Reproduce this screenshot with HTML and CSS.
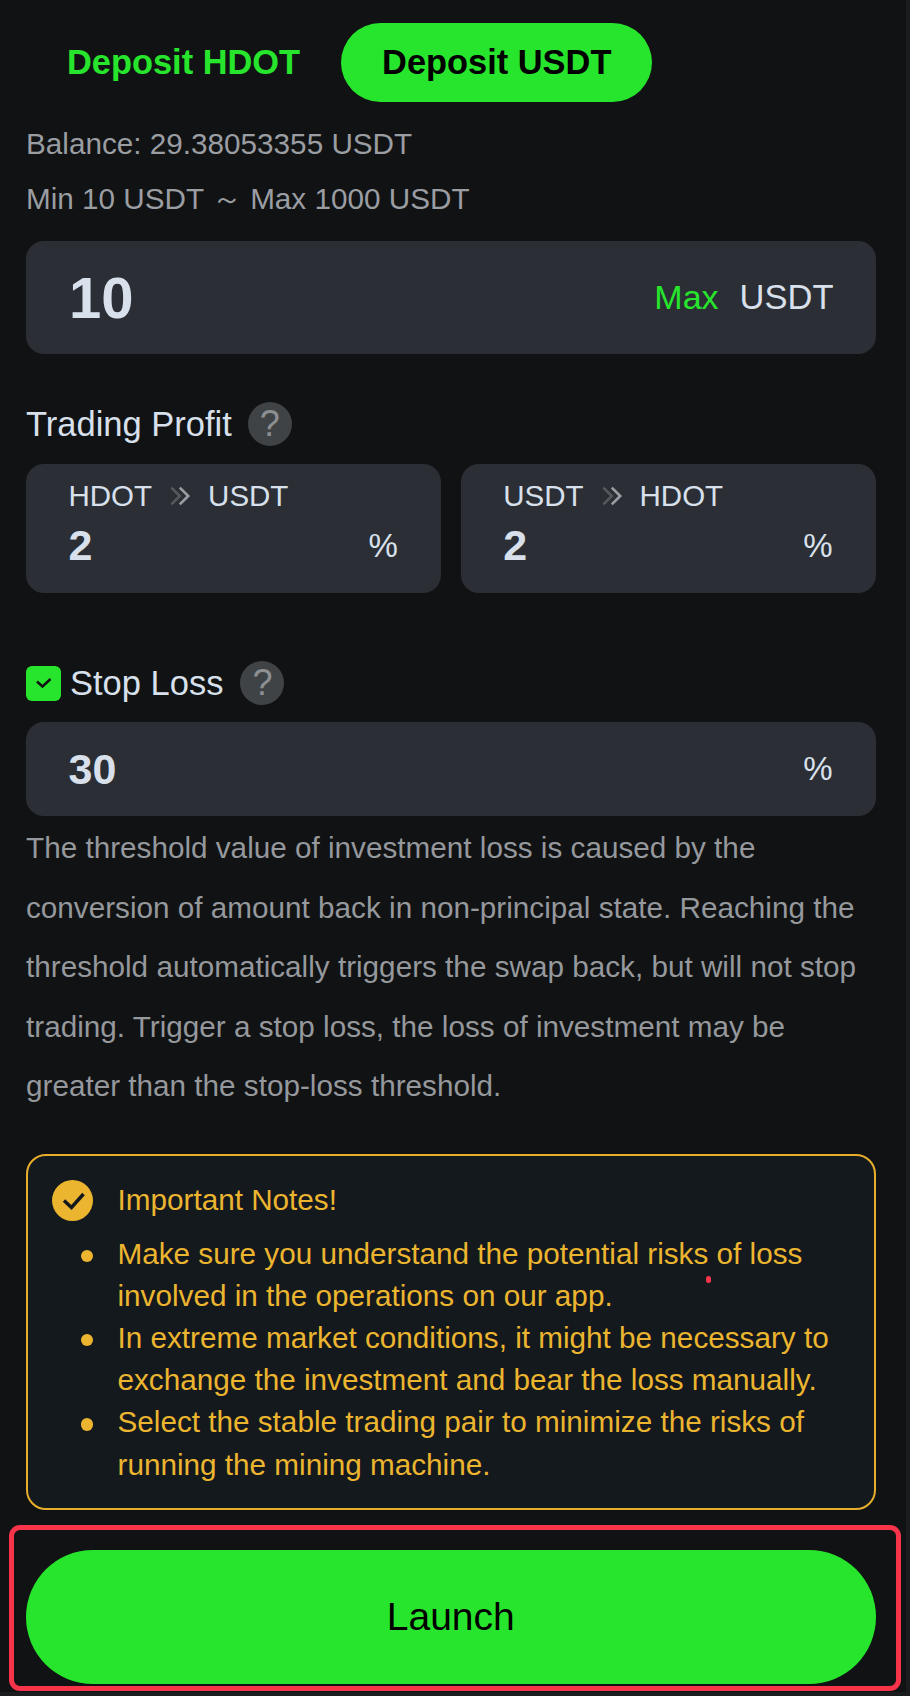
FILE: index.html
```html
<!DOCTYPE html>
<html lang="en">
<head>
  <meta charset="UTF-8">
  <title>Launch</title>
  <link rel="stylesheet" href="styles.css">
</head>
<body>
  <div class="tabs">
    <div class="tab">Deposit HDOT</div>
    <div class="tab active">Deposit USDT</div>
  </div>
  <div class="info">Balance: 29.38053355 USDT</div>
  <div class="info">Min 10 USDT ～ Max 1000 USDT</div>

  <div class="amount">
    <span class="amount-value">10</span>
    <span class="max">Max</span>
    <span class="unit">USDT</span>
  </div>

  <div class="label-row profit-label">
    <span>Trading Profit</span>
    <span class="help">?</span>
  </div>
  <div class="pairs">
    <div class="pair">
      <div class="pair-name">
        <span>HDOT</span>
        <svg class="arrows" viewBox="0 0 20 20"><path d="M2 3l7 7-7 7" stroke="#55585c"/><path d="M9 3l7 7-7 7" stroke="#9a9ea4"/></svg>
        <span>USDT</span>
      </div>
      <div class="pair-value"><b>2</b><span>%</span></div>
    </div>
    <div class="pair">
      <div class="pair-name">
        <span>USDT</span>
        <svg class="arrows" viewBox="0 0 20 20"><path d="M2 3l7 7-7 7" stroke="#55585c"/><path d="M9 3l7 7-7 7" stroke="#9a9ea4"/></svg>
        <span>HDOT</span>
      </div>
      <div class="pair-value"><b>2</b><span>%</span></div>
    </div>
  </div>

  <div class="label-row stop-label">
    <span class="check"><svg viewBox="0 0 35 35"><path d="M11 15.5l5.5 5 8-7.5"/></svg></span>
    <span>Stop Loss</span>
    <span class="help">?</span>
  </div>
  <div class="stop-input"><b>30</b><span>%</span></div>
  <p class="desc">The threshold value of investment loss is caused by the conversion of amount back in non-principal state. Reaching the threshold automatically triggers the swap back, but will not stop trading. Trigger a stop loss, the loss of investment may be greater than the stop-loss threshold.</p>

  <div class="notes">
    <div class="notes-title">
      <svg class="notes-icon" viewBox="0 0 41 41"><circle cx="20.5" cy="20.5" r="20.5" fill="#ecb52f"/><path d="M12 20.5l7.5 7L31.5 14" fill="none" stroke="#14191d" stroke-width="3.5"/></svg>
      <span>Important Notes!</span>
    </div>
    <ul>
      <li>Make sure you understand the potential risks of loss involved in the operations on our app.</li>
      <li>In extreme market conditions, it might be necessary to exchange the investment and bear the loss manually.</li>
      <li>Select the stable trading pair to minimize the risks of running the mining machine.</li>
    </ul>
  </div>

  <button class="launch">Launch</button>

  <div class="red-box"></div>
  <div class="red-dot"></div>
</body>
</html>
```

FILE: styles.css
```css
body {
  margin: 0;
  height: 1696px;
  padding: 23px 34.5px 0 26px;
  box-sizing: border-box;
  overflow: hidden;
  position: relative;
  background-color: #111213;
  box-shadow: inset -4px -4px 0 #1b1c1d;
  color: #d8e0ec;
  font-family: "Liberation Sans", Arial, sans-serif;
}
.tabs {
  display: flex;
}
.tab {
  height: 79px;
  line-height: 79px;
  padding: 0 41px;
  border-radius: 40px;
  font-size: 34.4px;
  font-weight: bold;
  color: #26e52c;
}
.tab.active {
  background-color: #26e52c;
  color: #000;
}
.tabs + .info {
  margin-top: 14px;
}
.info {
  height: 55px;
  line-height: 55px;
  font-size: 29.7px;
  color: #9a9da2;
}
.amount {
  display: flex;
  align-items: center;
  height: 113px;
  margin-top: 15px;
  padding: 0 42px 0 43px;
  border-radius: 18px;
  background-color: #2b2e34;
}
.amount-value {
  flex: 1;
  font-size: 58px;
  font-weight: bold;
}
.max {
  font-size: 34px;
  color: #26e52c;
  margin-right: 21px;
}
.unit {
  font-size: 34.5px;
}
.label-row {
  display: flex;
  align-items: center;
  height: 44px;
  font-size: 34.5px;
}
.profit-label {
  margin-top: 48px;
  gap: 16px;
}
.stop-label {
  margin-top: 68px;
}
.help {
  width: 44px;
  height: 44px;
  border-radius: 50%;
  background-color: #404345;
  color: #8d9092;
  text-align: center;
  line-height: 44px;
  font-size: 36px;
}
.pairs {
  display: grid;
  grid-template-columns: 1fr 1fr;
  gap: 20px;
  margin-top: 18px;
}
.pair {
  height: 129px;
  padding: 14px 43px 0 42.5px;
  box-sizing: border-box;
  border-radius: 18px;
  background-color: #2b2e34;
}
.pair-name {
  display: flex;
  align-items: center;
  height: 36px;
  font-size: 29.5px;
}
.arrows {
  width: 24px;
  height: 24px;
  margin: 0 15px 0 17px;
  fill: none;
  stroke-width: 2.2;
}
.pair-value {
  display: flex;
  justify-content: space-between;
  align-items: center;
  height: 48px;
  margin-top: 7px;
}
.pair-value span {
  margin-top: 2px;
}
.pair-value b,
.stop-input b {
  font-size: 43px;
}
.pair-value span,
.stop-input span {
  font-size: 33px;
}
.check {
  width: 35px;
  height: 35px;
  margin-right: 9px;
  border-radius: 6px;
  background-color: #26e52c;
}
.check svg {
  display: block;
  fill: none;
  stroke: #111213;
  stroke-width: 2.5;
}
.stop-label .help {
  margin-left: 17px;
}
.stop-input {
  display: flex;
  justify-content: space-between;
  align-items: center;
  height: 94px;
  margin-top: 17px;
  padding: 0 43px 0 42.5px;
  border-radius: 18px;
  background-color: #2b2e34;
}
.desc {
  margin: 2px 0 0;
  font-size: 29.7px;
  line-height: 59.5px;
  color: #95989c;
}
.notes {
  height: 356px;
  margin-top: 38px;
  padding: 0 20px 0 23.5px;
  box-sizing: border-box;
  border: 2.5px solid #e7ad2d;
  border-radius: 20px;
  background-color: #14191d;
  color: #ecb52f;
  font-size: 29.7px;
}
.notes-title {
  display: flex;
  align-items: center;
  gap: 25px;
  height: 41px;
  margin-top: 24px;
}
.notes-icon {
  width: 41px;
  height: 41px;
}
.notes ul {
  margin: 12px 0 0;
  padding-left: 66px;
  list-style: none;
}
.notes li {
  position: relative;
  line-height: 42.2px;
}
.notes li::before {
  content: "";
  position: absolute;
  left: -37px;
  top: 17px;
  width: 12.5px;
  height: 12.5px;
  border-radius: 50%;
  background-color: #ecb52f;
}
.launch {
  display: block;
  width: 100%;
  height: 134px;
  margin-top: 40px;
  border: none;
  border-radius: 67px;
  background-color: #26e52c;
  color: #000;
  font-family: inherit;
  font-size: 39px;
}
.red-box {
  position: absolute;
  left: 8.5px;
  top: 1525px;
  width: 892px;
  height: 166px;
  box-sizing: border-box;
  border: 5.5px solid #f8344a;
  border-radius: 11px;
}
.red-dot {
  position: absolute;
  left: 705.5px;
  top: 1275.5px;
  width: 5.5px;
  height: 7px;
  border-radius: 3px;
  background-color: #f8344a;
}
```
